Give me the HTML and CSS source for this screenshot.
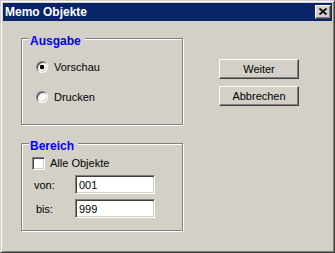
FILE: index.html
```html
<!DOCTYPE html>
<html>
<head>
<title>Memo Objekte</title>
<meta name="viewport" content="width=device-width, initial-scale=1.0">
<link rel="stylesheet" href="styles.css">
</head>
<body>

<div class="window">
  <div class="titlebar">
    <span class="title">Memo Objekte</span>
    <button class="close-btn" aria-label="Schließen">
      <svg width="8" height="7" viewBox="0 0 8 7">
        <path d="M0.5 0.5 L7.5 6.5 M7.5 0.5 L0.5 6.5" stroke="#000" stroke-width="1.8" fill="none"/>
      </svg>
    </button>
  </div>

  <div class="client">
    <div class="left-col">
      <div class="group group-output">
        <div class="group-title">Ausgabe</div>
        <label class="option option-first"><input type="radio" name="output" class="radio" checked>Vorschau</label>
        <label class="option option-second"><input type="radio" name="output" class="radio">Drucken</label>
      </div>

      <div class="group group-range">
        <div class="group-title">Bereich</div>
        <label class="check-row"><input type="checkbox" class="check">Alle Objekte</label>
        <div class="field-row field-first">
          <span class="field-label">von:</span>
          <input type="text" class="text-field" value="001">
        </div>
        <div class="field-row field-second">
          <span class="field-label label-bis">bis:</span>
          <input type="text" class="text-field" value="999">
        </div>
      </div>
    </div>

    <div class="right-col">
      <button class="push-btn">Weiter</button>
      <button class="push-btn">Abbrechen</button>
    </div>
  </div>
</div>

</body>
</html>
```

FILE: styles.css
```css
/* --- Win2000 style dialog --- */
body {
  margin: 0;
  padding: 0;
  font-family: 'Liberation Sans', Arial, sans-serif;
  font-size: 11px;
  color: #000;
  background-color: #d4d0c8;
}

.window {
  width: 335px;
  height: 253px;
  box-sizing: border-box;
  background-color: #d4d0c8;
  border: 1px solid;
  border-color: #d4d0c8 #404040 #404040 #d4d0c8;
  box-shadow: inset 1px 1px 0 #fff, inset -1px -1px 0 #808080;
  padding: 2px;
  display: flex;
  flex-direction: column;
}

.titlebar {
  height: 18px;
  background-color: #0a246a;
  display: flex;
  align-items: center;
  justify-content: space-between;
  padding: 0 1px 0 2px;
}

.title {
  color: #fff;
  font-weight: bold;
  font-size: 12px;
  line-height: 18px;
}

.close-btn {
  width: 16px;
  height: 14px;
  padding: 0;
  margin: 0;
  background-color: #d4d0c8;
  border: 1px solid;
  border-color: #fff #404040 #404040 #fff;
  box-shadow: inset -1px -1px 0 #808080;
  display: flex;
  align-items: center;
  justify-content: center;
}

.close-btn svg {
  display: block;
  margin: 0 1px 1px 0;
}

.client {
  flex: 1;
  display: flex;
  padding: 17px 0 0 18px;
}

.left-col {
  width: 162px;
  display: flex;
  flex-direction: column;
}

/* group boxes (etched frame) */
.group {
  box-sizing: border-box;
  border: 1px solid #808080;
  box-shadow: inset 1px 1px 0 #fff, 1px 1px 0 #fff;
  display: flex;
  flex-direction: column;
}

.group-output {
  height: 87px;
}

.group-range {
  height: 88px;
  margin-top: 18px;
}

.group-title {
  width: fit-content;
  margin: -5px 0 0 7px;
  padding: 0 4px 0 1px;
  background-color: #d4d0c8;
  color: #0000ff;
  font-weight: bold;
  font-size: 12px;
  line-height: 14px;
}

.option {
  height: 16px;
  line-height: 16px;
  display: flex;
  align-items: center;
  gap: 6px;
  padding-left: 14px;
}
.option-first {
  margin-top: 11px;
}
.option-second {
  margin-top: 14px;
}

.radio {
  appearance: none;
  -webkit-appearance: none;
  width: 12px;
  height: 12px;
  margin: 0;
  box-sizing: border-box;
  border-radius: 50%;
  border: 1px solid;
  border-color: #808080 #fff #fff #808080;
  box-shadow: inset 1px 1px 0 #404040, inset -1px -1px 0 #d4d0c8;
  background-color: #fff;
}
.radio:checked {
  background: radial-gradient(circle, #000 0, #000 2px, #fff 2.6px);
}

.check-row {
  height: 16px;
  line-height: 16px;
  display: flex;
  align-items: center;
  gap: 5px;
  padding-left: 10px;
  margin-top: 2px;
}

.check {
  appearance: none;
  -webkit-appearance: none;
  width: 13px;
  height: 13px;
  margin: 0;
  box-sizing: border-box;
  border: 1px solid;
  border-color: #808080 #fff #fff #808080;
  box-shadow: inset 1px 1px 0 #404040, inset -1px -1px 0 #d4d0c8;
  background-color: #fff;
}

.field-row {
  display: flex;
  align-items: center;
  padding-left: 12px;
}
.field-first {
  margin-top: 4px;
}
.field-second {
  margin-top: 5px;
}

.field-label {
  width: 41px;
}
.label-bis {
  box-sizing: border-box;
  padding-left: 2px;
}

.text-field {
  appearance: none;
  -webkit-appearance: none;
  width: 80px;
  height: 19px;
  box-sizing: border-box;
  margin: 0;
  padding: 0 0 0 3px;
  border: 1px solid;
  border-color: #808080 #fff #fff #808080;
  box-shadow: inset 1px 1px 0 #404040, inset -1px -1px 0 #d4d0c8;
  background-color: #fff;
  font-family: 'Liberation Sans', Arial, sans-serif;
  font-size: 11px;
  color: #000;
  outline: none;
}

.right-col {
  margin-left: 36px;
  padding-top: 21px;
  display: flex;
  flex-direction: column;
  gap: 7px;
}

.push-btn {
  width: 80px;
  height: 20px;
  margin: 0;
  padding: 0;
  background-color: #d4d0c8;
  border: 1px solid;
  border-color: #fff #404040 #404040 #fff;
  box-shadow: inset -1px -1px 0 #808080;
  font-family: 'Liberation Sans', Arial, sans-serif;
  font-size: 11px;
  color: #000;
}
```
